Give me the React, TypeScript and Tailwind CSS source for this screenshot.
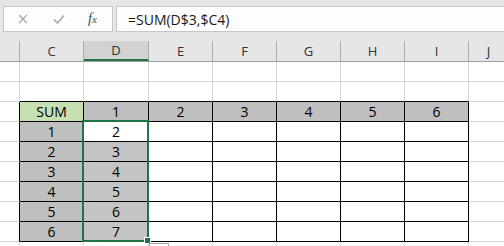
const COLS = [
  { name: "", w: "w-[20px]" },
  { name: "C", w: "w-[64px]" },
  { name: "D", w: "w-[65px]" },
  { name: "E", w: "w-[64px]" },
  { name: "F", w: "w-[64px]" },
  { name: "G", w: "w-[64px]" },
  { name: "H", w: "w-[64px]" },
  { name: "I", w: "w-[64px]" },
  { name: "J", w: "w-[40px]" },
];

const GRID = "#d4d4d4";

type Cell = { text?: string; bg?: string };

const cellAt = (r: number, c: number): Cell => {
  if (r === 2) {
    if (c === 1) return { text: "SUM", bg: "bg-[#c6e0b4]" };
    if (c >= 2 && c <= 7) return { text: String(c - 1), bg: "bg-[#bfbfbf]" };
  }
  if (r >= 3 && r <= 8) {
    if (c === 1) return { text: String(r - 2), bg: "bg-[#bfbfbf]" };
    if (c === 2)
      return { text: String(r - 1), bg: r === 3 ? "bg-white" : "bg-[#c4c4c4]" };
  }
  return {};
};

const SheetRow = ({ r }: { r: number }) => (
  <div className="flex h-[20px] shrink-0">
    {COLS.map((col, c) => {
      const cell = cellAt(r, c);
      const blackBottom = c >= 1 && c <= 7 && r >= 1 && r <= 8;
      const blackRight = r >= 2 && r <= 8 && c <= 7;
      return (
        <div
          key={c}
          className={`${col.w} shrink-0 h-full flex items-center justify-center border-r border-b text-[14px] text-black ${
            cell.bg ?? ""
          } ${blackBottom ? "border-b-black" : "border-b-[#d4d4d4]"} ${
            blackRight ? "border-r-black" : "border-r-[#d4d4d4]"
          }`}
        >
          {cell.text}
        </div>
      );
    })}
  </div>
);

const App = () => {
  return (
    <div
      className="relative w-[504px] h-[246px] overflow-hidden bg-white"
      style={{ fontFamily: '"Open Sans", "Noto Sans", sans-serif' }}
    >
      {/* formula bar */}
      <div className="h-[41px] bg-[#e6e6e6] flex items-start pt-[6px] pl-[3px] gap-[3px]">
        <div className="w-[110px] h-[26px] bg-[#fdfdfd] border border-[#c6c6c6] flex items-center">
          <svg width="10" height="10" viewBox="0 0 10 10" className="ml-[14px]">
            <path d="M1 1 L9 9 M9 1 L1 9" stroke="#a8a8a8" strokeWidth="1.2" fill="none" />
          </svg>
          <svg width="12" height="10" viewBox="0 0 12 10" className="ml-[25px]">
            <path d="M1 5.5 L4.5 9 L11 1.5" stroke="#a8a8a8" strokeWidth="1.6" fill="none" />
          </svg>
          <span
            className="ml-[23px] italic text-[14px] text-[#4a4a4a] leading-none"
            style={{ fontFamily: '"Liberation Serif", serif' }}
          >
            f<span className="text-[11px]">x</span>
          </span>
        </div>
        <div className="flex-1 h-[26px] bg-[#fdfdfd] border border-r-0 border-[#c6c6c6] flex items-center pl-[11px] text-[14px] text-[#1a1a1a]">
          =SUM(D$3,$C4)
        </div>
      </div>

      {/* column headers */}
      <div className="flex h-[21px] bg-[#e6e6e6] border-b border-[#9e9e9e]">
        {COLS.map((col, c) => (
          <div
            key={c}
            className={`${col.w} shrink-0 h-full flex items-center justify-center text-[13px] ${
              c === 2
                ? "bg-[#d2d2d2] text-[#1e3b2a] border-b-2 border-b-[#217346] border-r border-r-[#ababab] pt-[2px]"
                : "text-[#333] border-r border-r-[#ababab] pt-[1px]"
            }`}
          >
            {col.name}
          </div>
        ))}
      </div>

      {/* sheet rows */}
      {Array.from({ length: 10 }, (_, r) => (
        <SheetRow key={r} r={r} />
      ))}

      {/* selection D4:D9 */}
      <div className="absolute left-[82px] top-[120px] w-[67px] h-[122px] border-2 border-[#217346]" />
      <div className="absolute left-[144px] top-[237px] w-[7px] h-[7px] bg-[#217346] border border-white" />
      <div className="absolute left-[149px] top-[243px] w-[20px] h-[10px] bg-white border border-[#a6a6a6]" />
    </div>
  );
};

export default App;
